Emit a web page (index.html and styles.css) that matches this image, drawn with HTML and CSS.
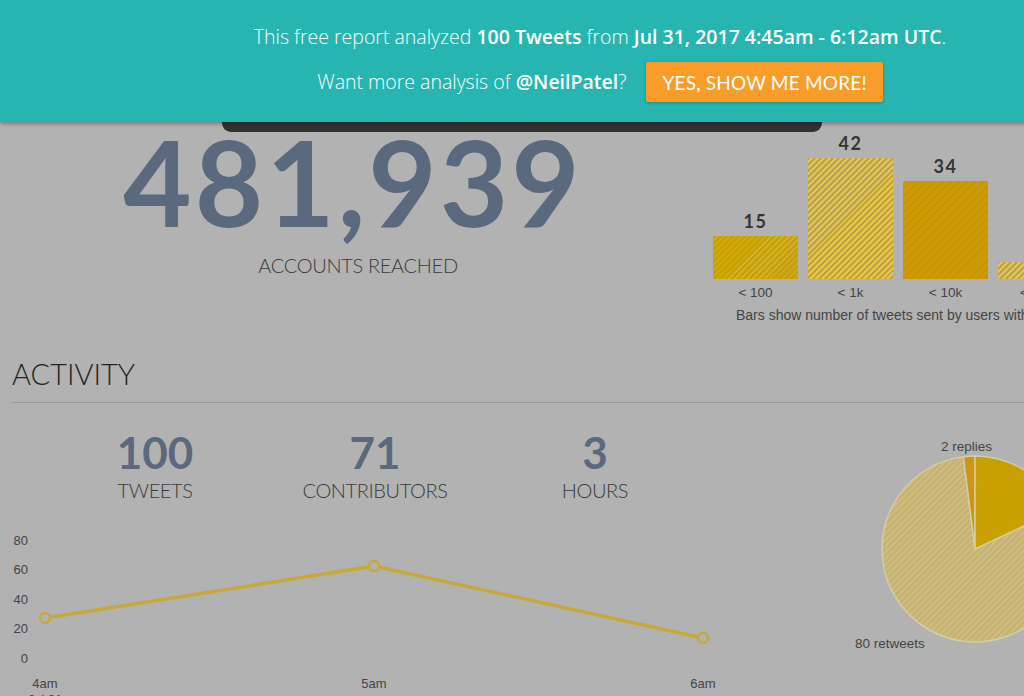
FILE: index.html
```html
<!DOCTYPE html>
<html lang="en">
<head>
<meta charset="utf-8">
<title>Twitter Report</title>
<link rel="stylesheet" href="styles.css">
</head>
<body>
<div class="page">
  <header class="banner">
    <p class="banner-line">This free report analyzed <b>100 Tweets</b> from <b>Jul 31, 2017 4:45am - 6:12am UTC</b>.</p>
    <div class="banner-row">
      <p class="banner-line">Want more analysis of <b>@NeilPatel</b>?</p>
      <a class="cta" href="#">YES, SHOW ME MORE!</a>
    </div>
  </header>
  <div class="dark-tab"></div>

  <section class="top">
    <div class="hero">
      <div class="hero-num">481,939</div>
      <div class="hero-label">ACCOUNTS REACHED</div>
    </div>
    <div class="bars">
      <div class="bar-row">
        <div class="bar-col">
          <span class="bar-val">15</span>
          <div class="bar bar-a" style="height:43px"></div>
          <span class="bar-lbl">&lt; 100</span>
        </div>
        <div class="bar-col">
          <span class="bar-val">42</span>
          <div class="bar bar-b" style="height:121px"></div>
          <span class="bar-lbl">&lt; 1k</span>
        </div>
        <div class="bar-col">
          <span class="bar-val">34</span>
          <div class="bar bar-c" style="height:98px"></div>
          <span class="bar-lbl">&lt; 10k</span>
        </div>
        <div class="bar-col">
          <span class="bar-val">6</span>
          <div class="bar bar-b" style="height:17px"></div>
          <span class="bar-lbl">&lt; 100k</span>
        </div>
      </div>
      <p class="bar-caption">Bars show number of tweets sent by users with this many followers</p>
    </div>
  </section>

  <section class="activity">
    <h2 class="act-title">ACTIVITY</h2>
    <div class="act-body">
      <div class="act-left">
        <div class="stats">
          <div class="stat"><div class="stat-num">100</div><div class="stat-lbl">TWEETS</div></div>
          <div class="stat"><div class="stat-num">71</div><div class="stat-lbl">CONTRIBUTORS</div></div>
          <div class="stat"><div class="stat-num">3</div><div class="stat-lbl">HOURS</div></div>
        </div>
        <svg class="line-chart" width="740" height="180" viewBox="0 0 740 180">
          <g class="axis">
            <text x="28" y="14.5" text-anchor="end">80</text>
            <text x="28" y="44" text-anchor="end">60</text>
            <text x="28" y="73.5" text-anchor="end">40</text>
            <text x="28" y="103" text-anchor="end">20</text>
            <text x="28" y="132.5" text-anchor="end">0</text>
            <text x="45" y="158" text-anchor="middle">4am</text>
            <text x="374" y="158" text-anchor="middle">5am</text>
            <text x="703" y="158" text-anchor="middle">6am</text>
            <text x="45" y="174" text-anchor="middle">Jul 31</text>
          </g>
          <polyline class="series" points="45,88 374,36 703,108"/>
          <circle class="pt" cx="45" cy="88" r="5"/>
          <circle class="pt" cx="374" cy="36" r="5"/>
          <circle class="pt" cx="703" cy="108" r="5"/>
        </svg>
      </div>
      <svg class="pie" width="360" height="260" viewBox="0 0 360 260">
        <defs>
          <pattern id="pRt" width="4.4" height="4.4" patternUnits="userSpaceOnUse" patternTransform="rotate(45)">
            <rect width="4.4" height="4.4" fill="#c6b26e"/>
            <rect width="2" height="4.4" fill="#cebd84"/>
          </pattern>
          <pattern id="pRp" width="4" height="4" patternUnits="userSpaceOnUse" patternTransform="rotate(45)">
            <rect width="4" height="4" fill="#c99c12"/>
            <rect width="1.5" height="4" fill="#cf8d1a"/>
          </pattern>
        </defs>
        <path d="M135 127 L219.15 87.4 A93 93 0 1 1 123.34 34.73 Z" fill="url(#pRt)" class="slice"/>
        <path d="M135 127 L123.34 34.73 A93 93 0 0 1 135 34 Z" fill="url(#pRp)" class="slice"/>
        <path d="M135 127 L135 34 A93 93 0 0 1 219.15 87.4 Z" fill="#c8a000" class="slice"/>
        <text class="pie-lbl" x="101" y="29">2 replies</text>
        <text class="pie-lbl" x="15" y="226">80 retweets</text>
      </svg>
    </div>
  </section>
</div>
</body>
</html>
```

FILE: styles.css
```css
html, body {
  margin: 0;
  padding: 0;
}
body {
  background: #b2b2b2;
  overflow: hidden;
  font-family: "Liberation Sans", Arial, sans-serif;
  color: #444;
}
.page {
  width: 1200px;
}

/* banner */
.banner {
  position: relative;
  z-index: 2;
  height: 122px;
  box-sizing: border-box;
  padding-top: 22px;
  background: #26b5b0;
  box-shadow: 0 2px 4px rgba(0, 0, 0, 0.3);
  color: #fff;
  text-align: center;
  font-family: "Open Sans", sans-serif;
}
.banner-line {
  margin: 0;
  font-size: 19.5px;
  line-height: 30px;
  font-weight: 300;
}
.banner-line b {
  font-weight: 600;
}
.banner-row {
  display: flex;
  justify-content: center;
  align-items: center;
  gap: 20px;
  margin-top: 10px;
}
.cta {
  display: flex;
  align-items: center;
  height: 40px;
  padding: 0 16px;
  background: #f99d2a;
  color: #fff;
  text-decoration: none;
  border-radius: 2px;
  box-shadow: 0 1px 3px rgba(0, 0, 0, 0.25);
  font-family: Lato, sans-serif;
  font-size: 19px;
  font-weight: 400;
  letter-spacing: 0.2px;
}
.dark-tab {
  margin-left: 222px;
  width: 600px;
  height: 10px;
  background: #323232;
  border-radius: 0 0 9px 9px;
}

/* top */
.top {
  display: flex;
  height: 225px;
}
.hero {
  width: 706px;
  text-align: center;
}
.hero-num {
  font-family: Lato, sans-serif;
  font-weight: 700;
  font-size: 118px;
  line-height: 100px;
  letter-spacing: 3px;
  color: #5a697e;
}
.hero-label {
  margin-top: 21px;
  padding-left: 10px;
  font-family: Lato, sans-serif;
  font-weight: 300;
  font-size: 20px;
  line-height: 24px;
  letter-spacing: -0.3px;
  color: #3a3a3a;
}
.bars {
  margin-left: 7px;
  width: 487px;
}
.bar-row {
  display: flex;
  align-items: flex-end;
  gap: 10px;
  height: 153px;
}
.bar-col {
  width: 85px;
  display: flex;
  flex-direction: column;
  align-items: center;
  justify-content: flex-end;
}
.bar-val {
  font-family: Lato, sans-serif;
  font-size: 18px;
  line-height: 22px;
  font-weight: 700;
  letter-spacing: 1.5px;
  color: #353535;
  margin-bottom: 4px;
}
.bar {
  width: 85px;
  border-radius: 1px;
}
.bar-a {
  background: repeating-linear-gradient(135deg, #c8a200 0 3.2px, #d2b440 3.2px 4.2px);
}
.bar-b {
  background: repeating-linear-gradient(135deg, #c9a521 0 2.1px, #d9c374 2.1px 4.2px);
}
.bar-c {
  background: repeating-linear-gradient(135deg, #c99c00 0 4.5px, #cd8b12 4.5px 5.8px);
}
.bar-lbl {
  margin-top: 6px;
  height: 0;
  line-height: 16px;
  font-size: 13.5px;
  color: #444;
  white-space: nowrap;
  overflow: visible;
}
.bar-caption {
  margin: 22px 0 0 23px;
  font-size: 14px;
  line-height: 16px;
  color: #444;
  white-space: nowrap;
}

/* activity */
.act-title {
  margin: 0 0 0 12px;
  padding-bottom: 11px;
  border-bottom: 1px solid #999;
  font-family: Lato, sans-serif;
  font-weight: 300;
  font-size: 29px;
  line-height: 34px;
  color: #222;
}
.act-body {
  display: flex;
}
.act-left {
  width: 840px;
}
.stats {
  display: flex;
  padding-left: 45px;
  margin-top: 25px;
}
.stat {
  width: 220px;
  text-align: center;
}
.stat-num {
  font-family: Lato, sans-serif;
  font-weight: 700;
  font-size: 44px;
  line-height: 48px;
  color: #5a697e;
}
.stat-lbl {
  margin-top: 2px;
  font-family: Lato, sans-serif;
  font-weight: 300;
  font-size: 20px;
  line-height: 24px;
  letter-spacing: -0.4px;
  color: #3a3a3a;
}
.line-chart {
  display: block;
  margin-top: 28px;
}
.axis text {
  font-family: "Liberation Sans", Arial, sans-serif;
  font-size: 13px;
  fill: #444;
}
.series {
  fill: none;
  stroke: #c7a93a;
  stroke-width: 3.5;
  stroke-linejoin: round;
}
.pt {
  fill: #b2b2b2;
  stroke: #c7a93a;
  stroke-width: 2.5;
}
.pie {
  display: block;
  margin-top: 19px;
}
.slice {
  stroke: #d5cda4;
  stroke-width: 1.5;
}
.pie-lbl {
  font-family: "Liberation Sans", Arial, sans-serif;
  font-size: 13.5px;
  fill: #444;
}
```
